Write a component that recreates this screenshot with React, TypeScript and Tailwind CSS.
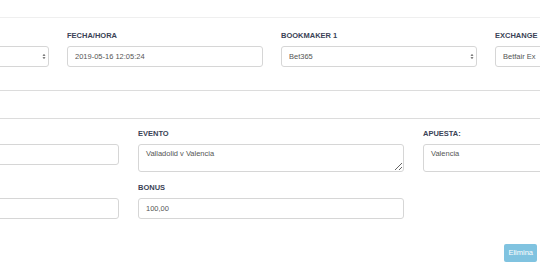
import React from 'react';

const font = "font-['Liberation_Sans',Arial,sans-serif]";

const Label = ({ children }: { children?: React.ReactNode }) => (
  <label className="block h-[9px] leading-[9px] text-[7.5px] font-bold uppercase text-[#3b4356] mb-[6px] whitespace-nowrap">
    {children}
  </label>
);

const Arrows = () => (
  <svg width="4" height="7" viewBox="0 0 4 7" className="absolute right-[3px] top-[7px] pointer-events-none">
    <path d="M0.5 2.8 L2 1 L3.5 2.8 Z" fill="#555" />
    <path d="M0.5 4.2 L2 6 L3.5 4.2 Z" fill="#555" />
  </svg>
);

const fieldCls =
  'block w-full h-[21px] rounded-[3px] border border-[#d6d6d6] bg-white px-[7px] text-[7.5px] text-[#555555] outline-none';

const SelectBox = ({ value }: { value: string }) => (
  <div className="relative">
    <select className={fieldCls + ' appearance-none'} defaultValue={value}>
      <option value={value}>{value}</option>
    </select>
    <Arrows />
  </div>
);

const TextBox = ({ value }: { value: string }) => (
  <input className={fieldCls} defaultValue={value} readOnly />
);

const Area = ({ value }: { value: string }) => (
  <textarea
    className="block w-full h-[28px] rounded-[3px] border border-[#d6d6d6] bg-white px-[7px] pt-[4px] text-[7.5px] leading-[9px] text-[#555555] outline-none"
    defaultValue={value}
    readOnly
  />
);

export default function App() {
  return (
    <div className={`w-[540px] h-[272px] overflow-hidden bg-white ${font}`}>
      <div className="h-[17px]" />

      {/* Top row */}
      <div className="border-t border-[#efefef] pt-[13px]">
        <div className="flex gap-[18px] -ml-[147px]">
          <div className="w-[196px] shrink-0">
            <Label />
            <SelectBox value="" />
          </div>
          <div className="w-[196px] shrink-0">
            <Label>Fecha/Hora</Label>
            <TextBox value="2019-05-16 12:05:24" />
          </div>
          <div className="w-[196px] shrink-0">
            <Label>Bookmaker 1</Label>
            <SelectBox value="Bet365" />
          </div>
          <div className="w-[196px] shrink-0">
            <Label>Exchange</Label>
            <TextBox value="Betfair Ex" />
          </div>
        </div>
      </div>

      <div className="mt-[23px] border-t border-[#dcdcdc] h-[28px]" />

      {/* Bet details */}
      <div className="border-t border-[#dcdcdc] pt-[10px]">
        <div className="grid grid-cols-[266px_266px_266px] gap-x-[19px] gap-y-[11px] items-start -ml-[147px]">
          <div>
            <Label />
            <TextBox value="" />
          </div>
          <div>
            <Label>Evento</Label>
            <Area value="Valladolid v Valencia" />
          </div>
          <div>
            <Label>Apuesta:</Label>
            <Area value="Valencia" />
          </div>
          <div>
            <Label />
            <TextBox value="" />
          </div>
          <div>
            <Label>Bonus</Label>
            <TextBox value="100,00" />
          </div>
          <div />
        </div>
      </div>

      <div className="flex justify-end pr-[3px] mt-[25px]">
        <button className="h-[18px] px-[4px] rounded-[2px] bg-[#80c3e0] text-white text-[7.5px] leading-[18px]">
          Elimina
        </button>
      </div>
    </div>
  );
}
